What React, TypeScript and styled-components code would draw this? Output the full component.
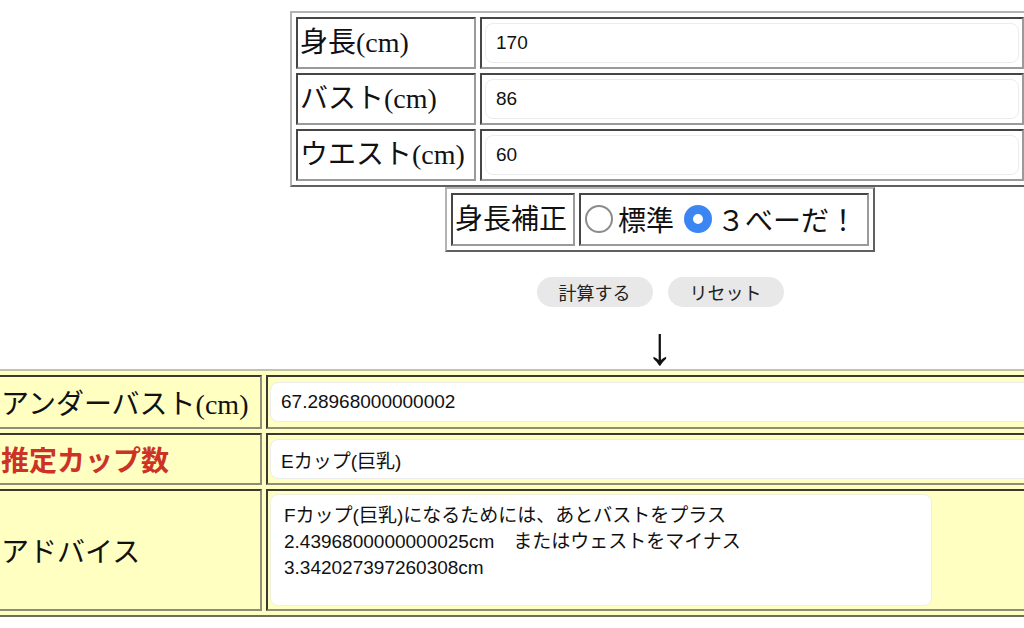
import styled, { createGlobalStyle } from "styled-components";

const GlobalStyle = createGlobalStyle`
  html, body {
    margin: 0;
    padding: 0;
    background: #ffffff;
    overflow: hidden;
  }
  body {
    font-family: "Liberation Serif", "Noto Sans CJK JP", serif;
    color: #111;
  }
`;

const Page = styled.div`
  width: 1320px;
  padding-top: 11px;
  display: flex;
  flex-direction: column;
  align-items: center;
`;

const FormTable = styled.table<{ $width: number }>`
  width: ${(p) => p.$width}px;
  border: 2px outset #b4b4b4;
  border-spacing: 4px;
  border-collapse: separate;
  background: #fff;
`;

const LabelCell = styled.td<{ $width: number; $height: number }>`
  width: ${(p) => p.$width}px;
  height: ${(p) => p.$height}px;
  border: 2px inset #9a9a9a;
  padding: 0 2px;
  font-size: 28px;
  line-height: 1;
  white-space: nowrap;
`;

const ValueCell = styled.td`
  border: 2px inset #9a9a9a;
  padding: 0 3px;
`;

const TextBox = styled.input`
  display: block;
  width: 100%;
  height: 40px;
  box-sizing: border-box;
  border: 1px solid #ececec;
  border-radius: 8px;
  background: #fff;
  padding: 0 10px;
  font-family: "Liberation Sans", "Noto Sans CJK JP", sans-serif;
  font-size: 19px;
  color: #111;
  outline: none;
`;

const RadioCell = styled.td`
  border: 2px inset #9a9a9a;
  padding: 0 4px;
  font-size: 28px;
  white-space: nowrap;
`;

const RadioLabel = styled.label`
  display: inline-flex;
  align-items: center;
  gap: 5px;
  margin-right: 10px;
  &:last-child {
    margin-right: 0;
  }
`;

const RadioDot = styled.span<{ $checked?: boolean }>`
  display: inline-block;
  width: 28px;
  height: 28px;
  box-sizing: border-box;
  border-radius: 50%;
  border: ${(p) => (p.$checked ? "9px solid #3b86f2" : "2.5px solid #8c8c8c")};
  background: #fff;
`;

const ButtonRow = styled.div`
  display: flex;
  gap: 15px;
  margin-top: 25px;
`;

const PillButton = styled.button`
  width: 116px;
  height: 30px;
  border: none;
  border-radius: 15px;
  background: #e8e8e8;
  font-family: "Noto Sans CJK JP", sans-serif;
  font-size: 18px;
  line-height: 30px;
  color: #222;
  padding: 0;
`;

const Arrow = styled.div`
  font-family: "Liberation Serif", serif;
  font-size: 54px;
  line-height: 54px;
  height: 50px;
  margin-top: 12px;
`;

const ResultTable = styled.table`
  width: 1336px;
  flex-shrink: 0;
  border: 2px outset #c2c2a4;
  border-spacing: 4px;
  border-collapse: separate;
  background: #ffffc2;
`;

const ResultLabel = styled.td<{ $alert?: boolean; $height: number }>`
  width: 258px;
  height: ${(p) => p.$height}px;
  border: 2px inset #8e8e78;
  padding: 0 1px;
  font-size: 28px;
  white-space: nowrap;
  color: ${(p) => (p.$alert ? "#cc3326" : "#111")};
  font-weight: ${(p) => (p.$alert ? 700 : 400)};
`;

const ResultValue = styled.td`
  border: 2px inset #8e8e78;
  padding: 0 2px;
`;

const AdviceBox = styled.textarea`
  display: block;
  width: 662px;
  height: 112px;
  box-sizing: border-box;
  border: 1px solid #f0f0e0;
  border-radius: 8px;
  background: #fff;
  padding: 8px 13px;
  resize: none;
  font-family: "Liberation Sans", "Noto Sans CJK JP", sans-serif;
  font-size: 19px;
  line-height: 26px;
  color: #111;
  outline: none;
`;

const advice =
  "Fカップ(巨乳)になるためには、あとバストをプラス\n2.4396800000000025cm　またはウェストをマイナス\n3.342027397260308cm";

export default function App() {
  return (
    <>
      <GlobalStyle />
      <Page>
        <FormTable $width={740}>
          <tbody>
            <tr>
              <LabelCell $width={172} $height={48}>身長(cm)</LabelCell>
              <ValueCell>
                <TextBox defaultValue="170" />
              </ValueCell>
            </tr>
            <tr>
              <LabelCell $width={172} $height={48}>バスト(cm)</LabelCell>
              <ValueCell>
                <TextBox defaultValue="86" />
              </ValueCell>
            </tr>
            <tr>
              <LabelCell $width={172} $height={48}>ウエスト(cm)</LabelCell>
              <ValueCell>
                <TextBox defaultValue="60" />
              </ValueCell>
            </tr>
          </tbody>
        </FormTable>

        <FormTable $width={430}>
          <tbody>
            <tr>
              <LabelCell $width={116} $height={49}>身長補正</LabelCell>
              <RadioCell>
                <RadioLabel>
                  <RadioDot />
                  標準
                </RadioLabel>
                <RadioLabel>
                  <RadioDot $checked />
                  ３べーだ！
                </RadioLabel>
              </RadioCell>
            </tr>
          </tbody>
        </FormTable>

        <ButtonRow>
          <PillButton>計算する</PillButton>
          <PillButton>リセット</PillButton>
        </ButtonRow>

        <Arrow>↓</Arrow>

        <ResultTable>
          <tbody>
            <tr>
              <ResultLabel $height={50}>アンダーバスト(cm)</ResultLabel>
              <ResultValue>
                <TextBox defaultValue="67.28968000000002" />
              </ResultValue>
            </tr>
            <tr>
              <ResultLabel $height={48} $alert>
                推定カップ数
              </ResultLabel>
              <ResultValue>
                <TextBox defaultValue="Eカップ(巨乳)" />
              </ResultValue>
            </tr>
            <tr>
              <ResultLabel $height={118}>アドバイス</ResultLabel>
              <ResultValue>
                <AdviceBox defaultValue={advice} />
              </ResultValue>
            </tr>
          </tbody>
        </ResultTable>
      </Page>
    </>
  );
}
